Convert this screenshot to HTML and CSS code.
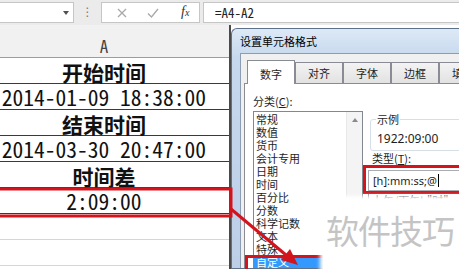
FILE: index.html
```html
<!DOCTYPE html>
<html lang="zh-CN">
<head>
    <meta charset="UTF-8">
    <title>设置单元格格式</title>
    <link rel="stylesheet" href="styles.css">
</head>
<body>

    <!-- 编辑栏 -->
    <div class="toolbar">
        <div class="namebox"><span class="drop"></span></div>
        <div class="grip">⋮</div>
        <div class="fxbox">
            <svg class="cancel" width="10" height="10" viewBox="0 0 10 10"><path d="M1 1L9 9M9 1L1 9"/></svg>
            <svg class="enter" width="12" height="10" viewBox="0 0 12 10"><path d="M1 5.5L4.5 9L11 1"/></svg>
            <span class="fx">f<small>x</small></span>
        </div>
        <div class="formula">=A4-A2</div>
    </div>

    <div class="main">
        <!-- 工作表 -->
        <div class="sheet">
            <div class="colhead">A</div>
            <div class="cell title">开始时间</div>
            <div class="cell value">2014-01-09 18:38:00</div>
            <div class="cell title">结束时间</div>
            <div class="cell value">2014-03-30 20:47:00</div>
            <div class="cell title">时间差</div>
            <div class="cell value">2:09:00</div>
            <div class="cell empty"></div>
            <div class="cell empty"></div>
        </div>

        <!-- 对话框 -->
        <div class="dialog">
            <div class="caption">设置单元格格式</div>
            <div class="dlg-body">
                <div class="tabs">
                    <div class="tab active">数字</div>
                    <div class="tab">对齐</div>
                    <div class="tab">字体</div>
                    <div class="tab">边框</div>
                    <div class="tab">填充</div>
                </div>
                <div class="panel">
                    <div class="col-left">
                        <div class="label">分类(<u>C</u>):</div>
                        <div class="listbox">
                            <ul>
                                <li>常规</li>
                                <li>数值</li>
                                <li>货币</li>
                                <li>会计专用</li>
                                <li>日期</li>
                                <li>时间</li>
                                <li>百分比</li>
                                <li>分数</li>
                                <li>科学记数</li>
                                <li>文本</li>
                                <li>特殊</li>
                                <li class="selected">自定义</li>
                            </ul>
                            <div class="scroll"><span class="up"></span></div>
                        </div>
                    </div>
                    <div class="col-right">
                        <fieldset class="sample">
                            <legend>示例</legend>
                            <div class="sample-val">1922:09:00</div>
                        </fieldset>
                        <div class="label type-label">类型(<u>T</u>):</div>
                        <div class="typebox">[h]:mm:ss;@<span class="caret"></span></div>
                        <div class="typelist">上午/下午h"时"mm"分"</div>
                    </div>
                </div>
            </div>
        </div>
    </div>

    <!-- 红色标注 -->
    <svg class="marks" width="459" height="269" viewBox="0 0 459 269">
        <rect x="-3" y="189" width="234" height="27"/>
        <rect x="364.5" y="166.5" width="100" height="26"/>
        <rect x="246.5" y="256.5" width="80" height="20"/>
        <line x1="231" y1="209" x2="286" y2="255"/>
        <polygon points="298,265 281,260 290,249"/>
    </svg>

    <div class="watermark">软件技巧</div>

</body>
</html>
```

FILE: styles.css
```css
* {
    margin: 0;
    padding: 0;
    box-sizing: border-box;
}

body {
    width: 459px;
    height: 269px;
    overflow: hidden;
    position: relative;
    background: #fff;
    font-family: "Noto Sans CJK SC", "Noto Sans", sans-serif;
    font-size: 11px;
    color: #1e1e1e;
}

/* 编辑栏 */
.toolbar {
    height: 25px;
    background: #ebebeb;
    display: flex;
    padding-top: 2px;
}

.namebox {
    width: 74px;
    height: 21px;
    background: #fff;
    border: 1px solid #c6c6c6;
    border-left: none;
    display: flex;
    align-items: center;
    justify-content: flex-end;
    padding-right: 4px;
}

.drop {
    width: 0;
    height: 0;
    border-left: 3px solid transparent;
    border-right: 3px solid transparent;
    border-top: 4px solid #505050;
}

.grip {
    width: 27px;
    text-align: center;
    font-family: "DejaVu Sans", sans-serif;
    font-size: 12px;
    line-height: 21px;
    color: #7a7a7a;
}

.fxbox {
    width: 99px;
    height: 21px;
    background: #fff;
    border: 1px solid #c6c6c6;
    display: flex;
    align-items: center;
}

.fxbox svg {
    fill: none;
    stroke: #a8a8a8;
    stroke-width: 1.3;
}

.cancel {
    margin-left: 15px;
}

.enter {
    margin-left: 20px;
}

.fx {
    margin-left: 22px;
    font-family: "Liberation Serif", serif;
    font-style: italic;
    font-size: 14px;
    line-height: 16px;
    color: #333;
}

.fx small {
    font-size: 10px;
}

.formula {
    flex: 1;
    margin-left: 3px;
    height: 21px;
    background: #fff;
    border: 1px solid #c6c6c6;
    border-right: none;
    padding-left: 11px;
    font-family: "Noto Sans Mono CJK SC", "Liberation Mono", monospace;
    font-size: 13px;
    line-height: 19px;
    color: #222;
}

/* 工作表 */
.main {
    display: flex;
    height: 244px;
    overflow: hidden;
}

.sheet {
    width: 231px;
    flex: none;
    border-right: 2px solid #4a4a4a;
}

.colhead {
    height: 33px;
    background: #f1f1f1;
    border-bottom: 1px solid #9c9c9c;
    text-align: center;
    padding: 10px 21px 0 0;
    font-family: "Noto Sans Mono CJK SC", "Liberation Mono", monospace;
    font-size: 17px;
    line-height: 22px;
    color: #444;
}

.cell {
    height: 26px;
    border-bottom: 1px solid #3a3a3a;
    display: flex;
    align-items: center;
    justify-content: center;
    padding-right: 21px;
    white-space: nowrap;
    color: #111;
}

.cell.title {
    font-size: 21px;
    line-height: 22px;
    font-weight: bold;
    padding-top: 2px;
}

.cell.value {
    font-family: "Noto Sans Mono CJK SC", "Liberation Mono", monospace;
    font-size: 21.5px;
    line-height: 22px;
}

.cell.empty {
    border-bottom-color: #d6d6d6;
}

/* 对话框 */
.dialog {
    flex: none;
    width: 228px;
    overflow: hidden;
    margin-top: 3px;
    border: 1px solid #5f7189;
    border-right: none;
    border-radius: 6px 0 0 0;
    background: linear-gradient(180deg, #dde9f6 0%, #c6d8ed 12%, #bccfe7 100%);
    padding-left: 8px;
}

.caption {
    height: 24px;
    padding-top: 1px;
    line-height: 23px;
    color: #000;
}

.dlg-body {
    height: 220px;
    background: #f0f0f0;
    border: 1px solid #8c9db3;
    border-right: none;
    padding: 6px 0 0 3px;
}

.tabs {
    display: flex;
    align-items: flex-end;
    height: 23px;
    margin-left: 3px;
}

.tab {
    width: 48px;
    flex: none;
    height: 21px;
    border: 1px solid #898c95;
    border-bottom: none;
    background: linear-gradient(180deg, #f3f3f3, #e2e2e2);
    text-align: center;
    padding-top: 3px;
    line-height: 14px;
}

.tab.active {
    height: 24px;
    margin-bottom: -1px;
    background: #fff;
    padding-top: 6px;
    position: relative;
    z-index: 1;
}

.panel {
    height: 190px;
    background: #fff;
    border: 1px solid #898c95;
    border-right: none;
    display: flex;
    gap: 5px;
    padding: 11px 0 0 8px;
}

.col-left {
    width: 110px;
    flex: none;
}

.label {
    height: 12px;
    line-height: 12px;
}

.listbox {
    margin-top: 4px;
    height: 170px;
    border: 1px solid #828790;
    display: flex;
}

.listbox ul {
    flex: 1;
    list-style: none;
    padding-top: 1px;
}

.listbox li {
    height: 13px;
    line-height: 13px;
    padding-left: 2px;
    white-space: nowrap;
}

.listbox li.selected {
    background: #3399ff;
    color: #fff;
}

.scroll {
    width: 16px;
    background: #f4f4f4;
    border-left: 1px solid #e8e8e8;
    display: flex;
    justify-content: center;
    padding-top: 6px;
}

.up {
    width: 0;
    height: 0;
    border-left: 3px solid transparent;
    border-right: 3px solid transparent;
    border-bottom: 4px solid #8a8a8a;
}

.col-right {
    width: 130px;
    flex: none;
    padding-top: 17px;
}

.sample {
    margin-left: 2px;
    border: 1px solid #d5dfe5;
    border-radius: 3px;
    padding: 6px 6px 5px;
}

.sample legend {
    padding: 0 1px;
    margin-left: -1px;
    line-height: 14px;
}

.sample-val {
    font-family: "Noto Sans", sans-serif;
    font-size: 12px;
    line-height: 13px;
}

.type-label {
    margin-top: 1px;
    padding-left: 4px;
}

.typebox {
    margin-top: 6px;
    height: 21px;
    border: 1px solid #abadb3;
    padding-left: 4px;
    font-family: "Noto Sans", sans-serif;
    line-height: 19px;
    display: flex;
    align-items: center;
}

.caret {
    width: 1px;
    height: 13px;
    background: #000;
    margin-left: 1px;
}

.typelist {
    margin-top: 2px;
    border: 1px solid #828790;
    padding-left: 3px;
    line-height: 13px;
    height: 40px;
    white-space: nowrap;
}

/* 红色标注 */
.marks {
    position: absolute;
    left: 0;
    top: 0;
    pointer-events: none;
}

.marks rect {
    fill: none;
    stroke: #d3141d;
    stroke-width: 3;
}

.marks line {
    stroke: #d3141d;
    stroke-width: 3;
}

.marks polygon {
    fill: #d3141d;
}

/* 水印 */
.watermark {
    position: absolute;
    left: 323px;
    top: 199px;
    width: 136px;
    height: 70px;
    background: #fff;
    box-shadow: 0 0 4px 3px #fff;
    padding: 12px 0 0 3px;
    font-size: 33px;
    line-height: 38px;
    letter-spacing: -1px;
    color: #c4c4c4;
    white-space: nowrap;
}
```
